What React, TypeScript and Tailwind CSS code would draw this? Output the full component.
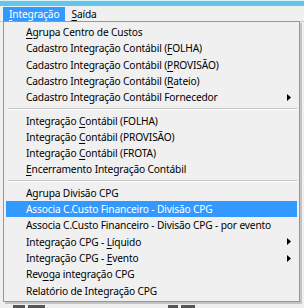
type Item =
  | { sep: true }
  | { text: string; u?: number; sub?: boolean; active?: boolean; sep?: false };

const items: Item[] = [
  { text: 'Agrupa Centro de Custos', u: 0 },
  { text: 'Cadastro Integração Contábil (FOLHA)', u: 30 },
  { text: 'Cadastro Integração Contábil (PROVISÃO)', u: 30 },
  { text: 'Cadastro Integração Contábil (Rateio)', u: 30 },
  { text: 'Cadastro Integração Contábil Fornecedor', sub: true },
  { sep: true },
  { text: 'Integração Contábil (FOLHA)', u: 11 },
  { text: 'Integração Contábil (PROVISÃO)', u: 11 },
  { text: 'Integração Contábil (FROTA)', u: 11 },
  { text: 'Encerramento Integração Contábil', u: 0 },
  { sep: true },
  { text: 'Agrupa Divisão CPG' },
  { text: 'Associa C.Custo Financeiro - Divisão CPG', active: true },
  { text: 'Associa C.Custo Financeiro - Divisão CPG - por evento' },
  { text: 'Integração CPG - Líquido', u: 17, sub: true },
  { text: 'Integração CPG - Evento', u: 17, sub: true },
  { text: 'Revoga integração CPG', u: 3 },
  { text: 'Relatório de Integração CPG' },
];

const Label = ({ text, u }: { text: string; u?: number }) => {
  if (u === undefined) return <span>{text}</span>;
  return (
    <span>
      {text.slice(0, u)}
      <span className="underline underline-offset-[2px]">{text[u]}</span>
      {text.slice(u + 1)}
    </span>
  );
};

const Arrow = () => (
  <svg width="4" height="7" viewBox="0 0 4 7" className="ml-auto mr-[6px]">
    <path d="M0 0 L4 3.5 L0 7 Z" fill="#000" />
  </svg>
);

export default function App() {
  return (
    <div className="relative w-[304px] h-[308px] overflow-hidden bg-[#f0f0f0] font-['Noto_Sans',sans-serif] text-[10.2px] tracking-[-0.15px] text-black">
      {/* title bar strip */}
      <div className="h-[6px] border-t border-[#dff2fa] bg-[#62c6ea]" />

      {/* menu bar */}
      <div className="flex h-[16px] items-start border-b border-[#c9c9c9] pl-[3px] pt-[1px]">
        <div className="flex h-[14px] items-center bg-[#3399ff] px-[6px] text-white leading-none">
          <Label text="Integração" u={0} />
        </div>
        <div className="flex h-[14px] items-center px-[6px] leading-none">
          <Label text="Saída" u={0} />
        </div>
      </div>

      {/* underlying window fragments */}
      <div className="absolute bottom-0 left-0 flex h-[3px] w-full gap-[3px] pl-[13px]">
        <div className="w-[12px] bg-[#555]" />
        <div className="w-[17px] bg-[#555]" />
        <div className="ml-[120px] w-[10px] bg-[#555]" />
        <div className="w-[14px] bg-[#555]" />
      </div>

      {/* dropdown */}
      <div className="absolute left-[3px] top-[21px] w-[297px] border border-[#979797] bg-[#f0f0f0] py-[2px] shadow-[2px_2px_0_0_rgba(0,0,0,0.18)]">
        {items.map((it, i) =>
          it.sep ? (
            <div key={i} className="flex h-[7px] items-center pl-[4px] pr-[2px]">
              <div className="h-[2px] w-full border-t border-b border-t-[#c5c5c5] border-b-white" />
            </div>
          ) : (
            <div
              key={i}
              className={`mx-[2px] flex h-[16.3px] items-center whitespace-nowrap pl-[20px] leading-none ${
                it.active ? 'bg-[#3399ff] text-white' : ''
              }`}
            >
              <Label text={it.text} u={it.u} />
              {it.sub && <Arrow />}
            </div>
          )
        )}
      </div>
    </div>
  );
}
